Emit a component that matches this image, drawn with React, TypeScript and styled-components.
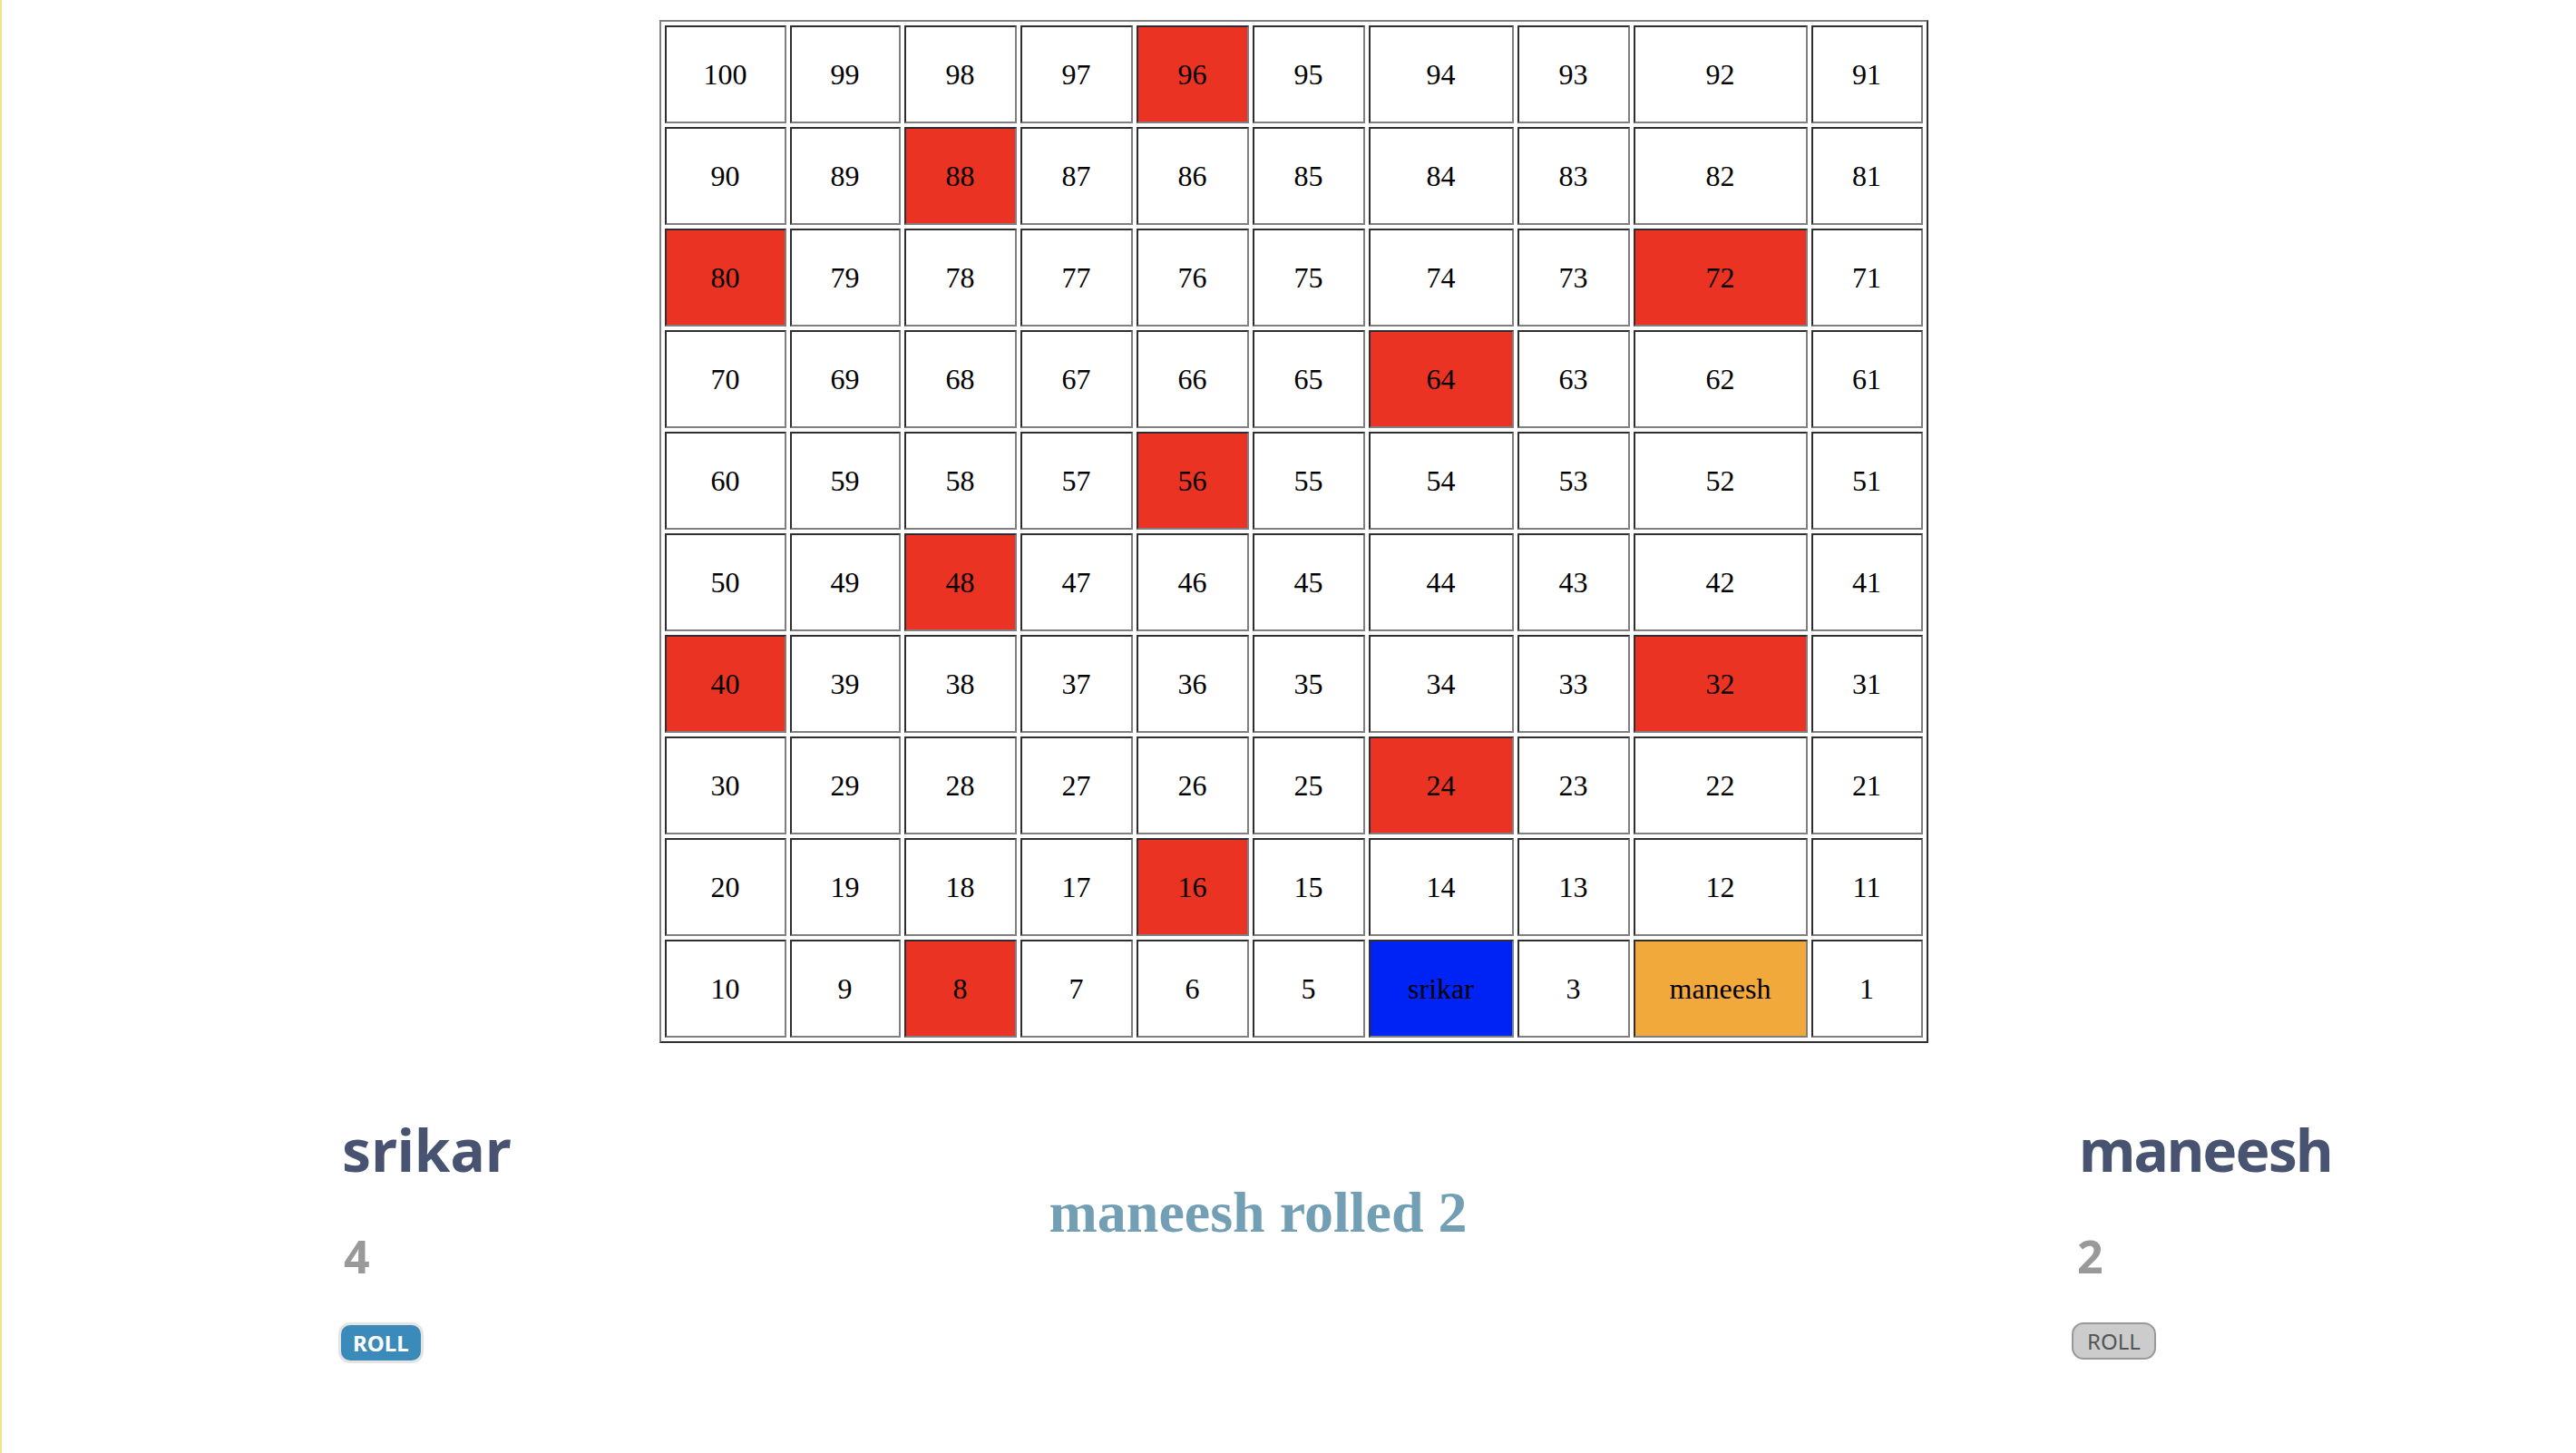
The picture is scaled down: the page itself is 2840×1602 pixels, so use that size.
import React from 'react'
import styled, { createGlobalStyle } from 'styled-components'

const GlobalStyle = createGlobalStyle`
  html, body {
    margin: 0;
    padding: 0;
    background: #ffffff;
  }
  * {
    box-sizing: border-box;
  }
`

// widths of the board columns, first one holds "100"
const COLUMN_WIDTHS = [134, 122, 124, 124, 124, 124, 160, 124, 192, 123]

interface PlayerData {
  name: string
  position: number
  color: string
  lastRoll: number
  active: boolean
}

const players: PlayerData[] = [
  { name: 'srikar', position: 4, color: '#0023f5', lastRoll: 4, active: true },
  { name: 'maneesh', position: 2, color: '#f2a93b', lastRoll: 2, active: false },
]

const isTrap = (n: number) => n % 8 === 0

const rows: number[][] = Array.from({ length: 10 }, (_, r) =>
  Array.from({ length: 10 }, (_, c) => 100 - r * 10 - c)
)

const App = () => {
  const cellContent = (n: number) => {
    const player = players.find((p) => p.position === n)
    if (player) return { label: player.name, bg: player.color }
    return { label: String(n), bg: isTrap(n) ? '#ea3323' : '#ffffff' }
  }

  return (
    <>
      <GlobalStyle />
      <Page>
        <BoardWrap>
          <Board>
            <tbody>
              {rows.map((row, r) => (
                <tr key={r}>
                  {row.map((n, c) => {
                    const { label, bg } = cellContent(n)
                    return (
                      <Cell key={n} $w={COLUMN_WIDTHS[c]} $bg={bg}>
                        {label}
                      </Cell>
                    )
                  })}
                </tr>
              ))}
            </tbody>
          </Board>
        </BoardWrap>

        <Footer>
          <Player $w={240}>
            <PlayerName>{players[0].name}</PlayerName>
            <Score>{players[0].lastRoll}</Score>
            <RollButton $active={players[0].active}>ROLL</RollButton>
          </Player>
          <Status>maneesh rolled 2</Status>
          <Player $w={300}>
            <PlayerName $tight>{players[1].name}</PlayerName>
            <Score>{players[1].lastRoll}</Score>
            <RollButton $active={players[1].active} disabled>ROLL</RollButton>
          </Player>
        </Footer>
      </Page>
    </>
  )
}

const Page = styled.div`
  height: 100vh;
  overflow: hidden;
  border-left: 2px solid #f3e38b;
  background: #ffffff;
`

const BoardWrap = styled.div`
  display: flex;
  justify-content: center;
  padding: 22px 0 0 10px;
`

const Board = styled.table`
  border-collapse: separate;
  border-spacing: 4px;
  border: 2px solid;
  border-color: #808080 #2f2f2f #2f2f2f #808080;
  font-family: 'Liberation Serif', 'Times New Roman', serif;
  font-size: 32px;
  color: #000000;
`

const Cell = styled.td<{ $w: number; $bg: string }>`
  width: ${(p) => p.$w}px;
  height: 108px;
  padding: 2px;
  border: 2px solid;
  border-color: #2f2f2f #7f7f7f #7f7f7f #2f2f2f;
  background: ${(p) => p.$bg};
  text-align: center;
  vertical-align: middle;
`

const Footer = styled.div`
  display: flex;
  align-items: flex-start;
  padding: 74px 256px 0 371px;
`

const Player = styled.div<{ $w: number }>`
  width: ${(p) => p.$w}px;
  flex: none;
  display: flex;
  flex-direction: column;
  align-items: flex-start;
`

const PlayerName = styled.h1<{ $tight?: boolean }>`
  margin: 0 0 0 ${(p) => (p.$tight ? 8 : 4)}px;
  font-family: 'Comic Sans MS', 'Noto Sans', sans-serif;
  font-size: 64px;
  line-height: 87px;
  font-weight: 700;
  letter-spacing: ${(p) => (p.$tight ? -2 : 0)}px;
  color: #475371;
  white-space: nowrap;
`

const Score = styled.h2`
  margin: 40px 0 0 6px;
  font-family: 'Comic Sans MS', 'Noto Sans', sans-serif;
  font-size: 50px;
  line-height: 68px;
  font-weight: 700;
  color: #999999;
`

const RollButton = styled.button<{ $active: boolean }>`
  margin-top: 39px;
  height: ${(p) => (p.$active ? 45 : 41)}px;
  padding: 0 ${(p) => (p.$active ? 13 : 15)}px;
  border: ${(p) => (p.$active ? '3px solid #e4e4e4' : '2px solid #999999')};
  border-radius: 13px;
  background: ${(p) => (p.$active ? '#3b8bba' : '#cccccc')};
  color: ${(p) => (p.$active ? '#ffffff' : '#555555')};
  font-family: 'Comic Sans MS', 'Noto Sans', sans-serif;
  font-size: 24px;
  font-weight: ${(p) => (p.$active ? 700 : 400)};
  line-height: 1;
  cursor: pointer;
`

const Status = styled.h1`
  flex: 1;
  margin: 77px 0 0;
  padding-right: 123px;
  text-align: center;
  font-family: 'Liberation Serif', 'Times New Roman', serif;
  font-size: 64px;
  line-height: 71px;
  font-weight: 700;
  color: #739fb5;
  white-space: nowrap;
`

export default App
